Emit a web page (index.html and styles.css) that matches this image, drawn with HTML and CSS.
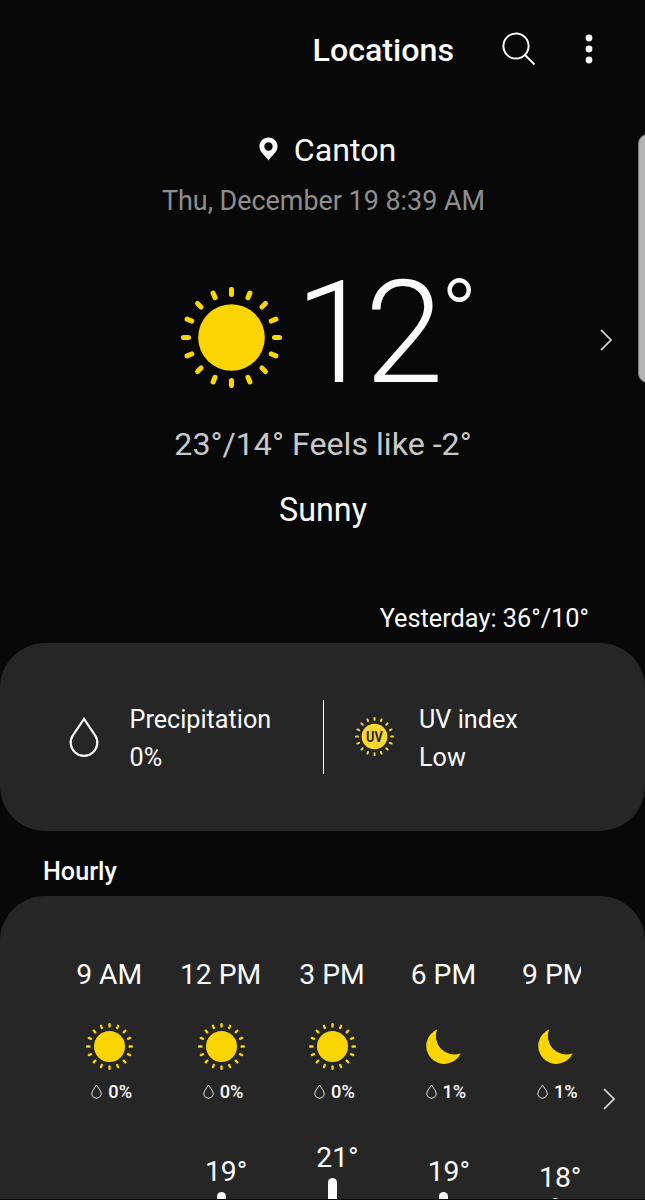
FILE: index.html
```html
<!DOCTYPE html>
<html lang="en">
<head>
    <meta charset="UTF-8">
    <meta name="viewport" content="width=device-width, initial-scale=1.0">
    <title>Weather</title>
    <link rel="stylesheet" href="styles.css">
</head>
<body>
    <!-- Shared icons -->
    <svg class="sprites" width="0" height="0">
        <symbol id="rays" viewBox="-50 -50 100 100">
            <g id="ray4">
                <path id="ray" d="M0 -47.6V-42.6"/>
                <use href="#ray" transform="rotate(22.5)"/>
                <use href="#ray" transform="rotate(45)"/>
                <use href="#ray" transform="rotate(67.5)"/>
            </g>
            <use href="#ray4" transform="rotate(90)"/>
            <use href="#ray4" transform="rotate(180)"/>
            <use href="#ray4" transform="rotate(270)"/>
            <circle r="33" stroke="none"/>
        </symbol>
        <symbol id="moon" viewBox="0 0 35 36">
            <path d="M11.3 .3A18 18 0 1 0 34.7 24.2A18.2 18.2 0 0 1 11.3 .3Z"/>
        </symbol>
        <symbol id="drop" viewBox="0 0 30 42">
            <path d="M15 3L4.2 18.8A13.3 13.3 0 1 0 25.8 18.8Z"/>
        </symbol>
    </svg>

    <header class="topbar">
        <span class="topbar-title">Locations</span>
        <svg class="search-icon" viewBox="0 0 34 34"><circle cx="14" cy="14" r="12.6"/><path d="M23 23L32.5 32.5"/></svg>
        <svg class="more-icon" viewBox="0 0 8 30"><circle cx="4" cy="4" r="3.4"/><circle cx="4" cy="15" r="3.4"/><circle cx="4" cy="26" r="3.4"/></svg>
    </header>

    <div class="scroll-handle"></div>

    <main>
        <section class="current">
            <div class="city">
                <svg class="pin-icon" viewBox="0 0 19 24"><path fill-rule="evenodd" d="M9.5 .4C4.4 .4 .4 4.3 .4 9.3C.4 15.5 6.5 18.5 9.5 23.5C12.5 18.5 18.6 15.5 18.6 9.3C18.6 4.3 14.6 .4 9.5 .4ZM9.5 5.3A4.2 4.2 0 1 1 9.5 13.7A4.2 4.2 0 1 1 9.5 5.3Z"/></svg>
                <span>Canton</span>
            </div>
            <div class="date">Thu, December 19 8:39 AM</div>
            <div class="now">
                <svg class="sun sun-big"><use href="#rays"/></svg>
                <span class="temp">12<span class="degree">°</span></span>
                <svg class="chevron chevron-now" viewBox="0 0 12 22"><path d="M1 1L11 11L1 21"/></svg>
            </div>
            <div class="feels">23°/14° Feels like -2°</div>
            <div class="condition">Sunny</div>
            <div class="yesterday">Yesterday: 36°/10°</div>
        </section>

        <section class="card details">
            <div class="detail">
                <svg class="drop drop-big"><use href="#drop"/></svg>
                <div class="detail-text">
                    <div>Precipitation</div>
                    <div>0%</div>
                </div>
            </div>
            <div class="detail uv">
                <svg class="uv-icon" viewBox="-50 -50 100 100">
                    <use href="#rays" x="-50" y="-50" width="100" height="100"/>
                    <text y="13" text-anchor="middle" textLength="43" lengthAdjust="spacingAndGlyphs">UV</text>
                </svg>
                <div class="detail-text">
                    <div>UV index</div>
                    <div>Low</div>
                </div>
            </div>
        </section>

        <h2>Hourly</h2>
        <section class="card hourly">
            <div class="hours">
                <div class="hour">
                    <div class="time">9 AM</div>
                    <svg class="sun"><use href="#rays"/></svg>
                    <div class="rain"><svg class="drop"><use href="#drop"/></svg>0%</div>
                </div>
                <div class="hour">
                    <div class="time">12 PM</div>
                    <svg class="sun"><use href="#rays"/></svg>
                    <div class="rain"><svg class="drop"><use href="#drop"/></svg>0%</div>
                    <div class="level" style="margin-top: 54px">19°</div>
                    <div class="bar"></div>
                </div>
                <div class="hour">
                    <div class="time">3 PM</div>
                    <svg class="sun"><use href="#rays"/></svg>
                    <div class="rain"><svg class="drop"><use href="#drop"/></svg>0%</div>
                    <div class="level" style="margin-top: 40px">21°</div>
                    <div class="bar"></div>
                </div>
                <div class="hour">
                    <div class="time">6 PM</div>
                    <svg class="moon"><use href="#moon"/></svg>
                    <div class="rain"><svg class="drop"><use href="#drop"/></svg>1%</div>
                    <div class="level" style="margin-top: 54px">19°</div>
                    <div class="bar"></div>
                </div>
                <div class="hour">
                    <div class="time">9 PM</div>
                    <svg class="moon"><use href="#moon"/></svg>
                    <div class="rain"><svg class="drop"><use href="#drop"/></svg>1%</div>
                    <div class="level" style="margin-top: 60px">18°</div>
                    <div class="bar"></div>
                </div>
            </div>
            <svg class="chevron chevron-hourly" viewBox="0 0 12 22"><path d="M1 1L11 11L1 21"/></svg>
        </section>
    </main>
</body>
</html>
```

FILE: styles.css
```css
* { box-sizing: border-box; }

body {
  margin: 0;
  height: 1200px;
  position: relative;
  overflow: hidden;
  background: #080808;
  color: #fafafa;
  font-family: Roboto, "Liberation Sans", sans-serif;
}

svg { display: block; flex: none; }
.sprites { position: absolute; }

/* Top bar */
.topbar {
  height: 101px;
  padding-right: 52px;
  display: flex;
  align-items: center;
  justify-content: flex-end;
}
.topbar-title { font-size: 32.2px; font-weight: 500; margin-bottom: 1px; }
.search-icon {
  width: 34px; height: 34px; margin: 0 49px 3px 48px;
  fill: none; stroke: #fafafa; stroke-width: 2;
}
.more-icon { width: 8px; height: 30px; margin-bottom: 3px; fill: #fafafa; }

.scroll-handle {
  position: absolute; top: 134px; right: -12px;
  width: 19px; height: 249px;
  background: #b4b4b4; border: 1px solid #777; border-radius: 10px;
}

/* Current weather */
.current {
  height: 542px;
  padding-top: 29px;
  display: flex;
  flex-direction: column;
  align-items: center;
}
.city { display: flex; align-items: center; gap: 16px; font-size: 32.2px; line-height: 40px; padding-left: 10px; }
.pin-icon { width: 19px; height: 24px; margin-bottom: 3px; fill: #fafafa; }
.date { margin-top: 15px; padding-left: 2px; font-size: 26.9px; line-height: 32px; color: #8f8f8f; }
.now {
  margin-top: 45px;
  width: 100%;
  position: relative;
  display: flex;
  align-items: center;
  padding-left: 181px;
  line-height: 144px;
}
.sun { width: 47px; height: 47px; fill: #fbd500; stroke: #fbd500; stroke-width: 5; stroke-linecap: round; }
.sun-big { width: 101px; height: 101px; margin-top: 7px; }
.temp { margin-left: 13px; font-size: 142px; font-weight: 300; letter-spacing: -9px; }
.degree { font-size: 99px; line-height: 0; vertical-align: 33px; margin-left: 6px; }
.chevron { fill: none; stroke: #ddd; stroke-width: 1.7; width: 12px; height: 22px; }
.chevron-now { position: absolute; left: 600px; top: 67px; }
.feels { margin-top: 18px; padding-left: 1px; font-size: 32.2px; line-height: 40px; color: #c8c8c8; }
.condition { margin-top: 26px; padding-left: 1px; font-size: 32.3px; line-height: 40px; }
.yesterday { margin: 73px 56px 0 0; align-self: flex-end; font-size: 25.3px; line-height: 32px; }

/* Cards */
.card { background: #262626; border-radius: 45px; }
.details {
  height: 188px;
  display: flex;
  align-items: center;
  font-size: 25.2px;
  line-height: 38px;
}
.detail { display: flex; align-items: center; width: 323px; height: 74px; padding-left: 69px; gap: 30.5px; }
.detail-text { padding-top: 4px; }
.uv { border-left: 1px solid #fafafa; padding-left: 31px; gap: 25.5px; }
.drop { width: 11px; height: 15px; fill: none; stroke: #e8e8e8; stroke-width: 2.6; }
.drop-big { width: 30px; height: 42px; stroke: #fafafa; stroke-width: 2.2; }
.uv-icon { width: 39px; height: 39px; margin-bottom: 2px; fill: #fdd82f; stroke: #fdd82f; stroke-width: 5; stroke-linecap: round; }
.uv-icon text { font-size: 36px; font-weight: 700; fill: #262626; stroke: none; }

h2 { margin: 0; padding: 7px 43px 0; height: 65px; font-size: 25.2px; font-weight: 500; line-height: 67px; }

/* Hourly forecast */
.hourly { height: 303px; overflow: hidden; position: relative; padding: 63px 64px 0 54px; border-radius: 45px 45px 0 0; }
.hours { display: flex; overflow: hidden; height: 240px; }
.hour { width: 111.4px; flex: none; display: flex; flex-direction: column; align-items: center; }
.time { font-size: 28.3px; line-height: 32px; padding-right: 1px; }
.hour .sun { margin: 32px 0 12px; }
.moon { width: 35px; height: 36px; margin: 38px 0 17px; fill: #fbd500; }
.rain { display: flex; align-items: center; gap: 6px; font-size: 18.2px; font-weight: 500; line-height: 20px; padding-left: 4px; }
.rain .drop { margin-bottom: 1px; }
.level { font-size: 28.3px; line-height: 32px; padding-left: 10px; }
.bar { width: 9px; flex: 1 0 10px; margin-top: 4px; border-radius: 5px 5px 0 0; background: #fafafa; }
.chevron-hourly { position: absolute; left: 603px; top: 192px; }
```
